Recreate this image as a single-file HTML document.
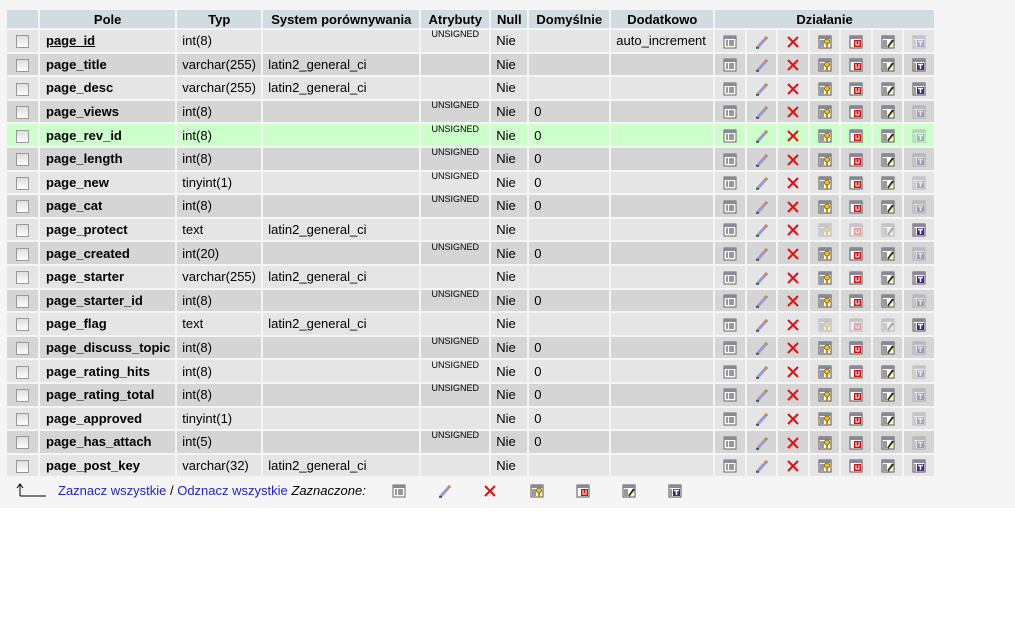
<!DOCTYPE html>
<html><head><meta charset="utf-8"><style>
body{margin:0;background:#fff;font-family:"Liberation Sans",Arial,sans-serif;font-size:13px;color:#000}
#wrap{position:absolute;left:0;top:0;width:1015px;height:508px;background:#f5f5f5}
table{position:absolute;left:5px;top:8px;border-collapse:separate;border-spacing:2px 2px}
td,th{padding:0 5px;height:21.6px;line-height:15px;white-space:nowrap;box-sizing:border-box}
th{background:#d0dce0;font-weight:bold;height:18px;font-size:13px}
tr.a td{background:#e5e5e5}tr.b td{background:#d5d5d5}tr.g td{background:#ccffcc}
td.n{font-weight:bold;padding-left:6px}
td.u{font-size:9px;text-align:center}
td.u span{position:relative;top:-6px}
td.i{text-align:center;padding:0}
td.c{text-align:center;padding:0;width:29.5px}
.cb{display:inline-block;width:11px;height:11px;border:1px solid #999;background:linear-gradient(#ddd,#fff);vertical-align:middle}
svg.ic{width:14px;height:14px;vertical-align:middle}
.f{opacity:.35}
#foot{position:absolute;left:0;top:480px;height:22px;width:700px;font-size:13px}
#foot a{color:#2222cc;text-decoration:none}
</style></head><body>
<svg width="0" height="0" style="position:absolute">
<defs>
<symbol id="br" viewBox="0 0 14 14"><rect x="1" y="1" width="12" height="12" fill="#fff" stroke="#666"/><rect x="1" y="1" width="12" height="3" fill="#889"/><path d="M3 6h2M3 8h2M3 10h2M6 6h5M6 8h5M6 10h5" stroke="#333"/></symbol>
<symbol id="pe" viewBox="0 0 14 14"><path d="M2 13L12 2" stroke="#9999cc" stroke-width="3"/><path d="M10.5 3.5L12 2" stroke="#e08020" stroke-width="3"/><path d="M1 13h3" stroke="#000"/></symbol>
<symbol id="x" viewBox="0 0 14 14"><path d="M2 2L12 12M12 2L2 12" stroke="#e01010" stroke-width="2"/></symbol>
<symbol id="k" viewBox="0 0 14 14"><rect x="1" y="1" width="12" height="12" fill="#fff" stroke="#555"/><rect x="1" y="1" width="12" height="3" fill="#889"/><path d="M3 5v7M5 5v7" stroke="#333"/><circle cx="9" cy="6.5" r="2.5" fill="#f0c020" stroke="#886600"/><path d="M9 9v4" stroke="#c09000" stroke-width="2"/></symbol>
<symbol id="un" viewBox="0 0 14 14"><rect x="1" y="1" width="12" height="12" fill="#fff" stroke="#555"/><rect x="1" y="1" width="12" height="3" fill="#889"/><rect x="5" y="5" width="7" height="7" fill="#cc1111"/><path d="M7 6v4h3V6" stroke="#fff" fill="none"/></symbol>
<symbol id="ix" viewBox="0 0 14 14"><rect x="1" y="1" width="12" height="12" fill="#fff" stroke="#555"/><rect x="1" y="1" width="12" height="3" fill="#889"/><path d="M3 5v7M5 5v7" stroke="#333"/><path d="M7 12L12 5" stroke="#222" stroke-width="2"/><path d="M8 12l4-5" stroke="#e0c020"/></symbol>
<symbol id="t" viewBox="0 0 14 14"><rect x="1" y="1" width="12" height="12" fill="#fff" stroke="#555"/><rect x="1" y="1" width="12" height="3" fill="#889"/><path d="M3 5v7" stroke="#333"/><rect x="5" y="5" width="7" height="7" fill="#442288"/><path d="M6 6.5h5M8.5 6.5V11" stroke="#fff" stroke-width="1.5"/></symbol>
</defs></svg>
<div id="wrap">
<table>
<tr><th style="width:31px"></th><th style="width:135px">Pole</th><th style="width:84px">Typ</th><th style="width:156px">System porównywania</th><th style="width:68px">Atrybuty</th><th style="width:36px">Null</th><th style="width:80px">Domyślnie</th><th style="width:102px">Dodatkowo</th><th colspan="7">Działanie</th></tr>
<tr class="a"><td class="i"><span class="cb"></span></td><td class="n"><u>page_id</u></td><td>int(8)</td><td></td><td class="u"><span>UNSIGNED</span></td><td>Nie</td><td></td><td>auto_increment</td><td class="c"><svg class="ic"><use href="#br"/></svg></td><td class="c"><svg class="ic"><use href="#pe"/></svg></td><td class="c"><svg class="ic"><use href="#x"/></svg></td><td class="c"><svg class="ic"><use href="#k"/></svg></td><td class="c"><svg class="ic"><use href="#un"/></svg></td><td class="c"><svg class="ic"><use href="#ix"/></svg></td><td class="c"><svg class="ic f"><use href="#t"/></svg></td></tr>
<tr class="b"><td class="i"><span class="cb"></span></td><td class="n">page_title</td><td>varchar(255)</td><td>latin2_general_ci</td><td></td><td>Nie</td><td></td><td></td><td class="c"><svg class="ic"><use href="#br"/></svg></td><td class="c"><svg class="ic"><use href="#pe"/></svg></td><td class="c"><svg class="ic"><use href="#x"/></svg></td><td class="c"><svg class="ic"><use href="#k"/></svg></td><td class="c"><svg class="ic"><use href="#un"/></svg></td><td class="c"><svg class="ic"><use href="#ix"/></svg></td><td class="c"><svg class="ic"><use href="#t"/></svg></td></tr>
<tr class="a"><td class="i"><span class="cb"></span></td><td class="n">page_desc</td><td>varchar(255)</td><td>latin2_general_ci</td><td></td><td>Nie</td><td></td><td></td><td class="c"><svg class="ic"><use href="#br"/></svg></td><td class="c"><svg class="ic"><use href="#pe"/></svg></td><td class="c"><svg class="ic"><use href="#x"/></svg></td><td class="c"><svg class="ic"><use href="#k"/></svg></td><td class="c"><svg class="ic"><use href="#un"/></svg></td><td class="c"><svg class="ic"><use href="#ix"/></svg></td><td class="c"><svg class="ic"><use href="#t"/></svg></td></tr>
<tr class="b"><td class="i"><span class="cb"></span></td><td class="n">page_views</td><td>int(8)</td><td></td><td class="u"><span>UNSIGNED</span></td><td>Nie</td><td>0</td><td></td><td class="c"><svg class="ic"><use href="#br"/></svg></td><td class="c"><svg class="ic"><use href="#pe"/></svg></td><td class="c"><svg class="ic"><use href="#x"/></svg></td><td class="c"><svg class="ic"><use href="#k"/></svg></td><td class="c"><svg class="ic"><use href="#un"/></svg></td><td class="c"><svg class="ic"><use href="#ix"/></svg></td><td class="c"><svg class="ic f"><use href="#t"/></svg></td></tr>
<tr class="g"><td class="i"><span class="cb"></span></td><td class="n">page_rev_id</td><td>int(8)</td><td></td><td class="u"><span>UNSIGNED</span></td><td>Nie</td><td>0</td><td></td><td class="c"><svg class="ic"><use href="#br"/></svg></td><td class="c"><svg class="ic"><use href="#pe"/></svg></td><td class="c"><svg class="ic"><use href="#x"/></svg></td><td class="c"><svg class="ic"><use href="#k"/></svg></td><td class="c"><svg class="ic"><use href="#un"/></svg></td><td class="c"><svg class="ic"><use href="#ix"/></svg></td><td class="c"><svg class="ic f"><use href="#t"/></svg></td></tr>
<tr class="b"><td class="i"><span class="cb"></span></td><td class="n">page_length</td><td>int(8)</td><td></td><td class="u"><span>UNSIGNED</span></td><td>Nie</td><td>0</td><td></td><td class="c"><svg class="ic"><use href="#br"/></svg></td><td class="c"><svg class="ic"><use href="#pe"/></svg></td><td class="c"><svg class="ic"><use href="#x"/></svg></td><td class="c"><svg class="ic"><use href="#k"/></svg></td><td class="c"><svg class="ic"><use href="#un"/></svg></td><td class="c"><svg class="ic"><use href="#ix"/></svg></td><td class="c"><svg class="ic f"><use href="#t"/></svg></td></tr>
<tr class="a"><td class="i"><span class="cb"></span></td><td class="n">page_new</td><td>tinyint(1)</td><td></td><td class="u"><span>UNSIGNED</span></td><td>Nie</td><td>0</td><td></td><td class="c"><svg class="ic"><use href="#br"/></svg></td><td class="c"><svg class="ic"><use href="#pe"/></svg></td><td class="c"><svg class="ic"><use href="#x"/></svg></td><td class="c"><svg class="ic"><use href="#k"/></svg></td><td class="c"><svg class="ic"><use href="#un"/></svg></td><td class="c"><svg class="ic"><use href="#ix"/></svg></td><td class="c"><svg class="ic f"><use href="#t"/></svg></td></tr>
<tr class="b"><td class="i"><span class="cb"></span></td><td class="n">page_cat</td><td>int(8)</td><td></td><td class="u"><span>UNSIGNED</span></td><td>Nie</td><td>0</td><td></td><td class="c"><svg class="ic"><use href="#br"/></svg></td><td class="c"><svg class="ic"><use href="#pe"/></svg></td><td class="c"><svg class="ic"><use href="#x"/></svg></td><td class="c"><svg class="ic"><use href="#k"/></svg></td><td class="c"><svg class="ic"><use href="#un"/></svg></td><td class="c"><svg class="ic"><use href="#ix"/></svg></td><td class="c"><svg class="ic f"><use href="#t"/></svg></td></tr>
<tr class="a"><td class="i"><span class="cb"></span></td><td class="n">page_protect</td><td>text</td><td>latin2_general_ci</td><td></td><td>Nie</td><td></td><td></td><td class="c"><svg class="ic"><use href="#br"/></svg></td><td class="c"><svg class="ic"><use href="#pe"/></svg></td><td class="c"><svg class="ic"><use href="#x"/></svg></td><td class="c"><svg class="ic f"><use href="#k"/></svg></td><td class="c"><svg class="ic f"><use href="#un"/></svg></td><td class="c"><svg class="ic f"><use href="#ix"/></svg></td><td class="c"><svg class="ic"><use href="#t"/></svg></td></tr>
<tr class="b"><td class="i"><span class="cb"></span></td><td class="n">page_created</td><td>int(20)</td><td></td><td class="u"><span>UNSIGNED</span></td><td>Nie</td><td>0</td><td></td><td class="c"><svg class="ic"><use href="#br"/></svg></td><td class="c"><svg class="ic"><use href="#pe"/></svg></td><td class="c"><svg class="ic"><use href="#x"/></svg></td><td class="c"><svg class="ic"><use href="#k"/></svg></td><td class="c"><svg class="ic"><use href="#un"/></svg></td><td class="c"><svg class="ic"><use href="#ix"/></svg></td><td class="c"><svg class="ic f"><use href="#t"/></svg></td></tr>
<tr class="a"><td class="i"><span class="cb"></span></td><td class="n">page_starter</td><td>varchar(255)</td><td>latin2_general_ci</td><td></td><td>Nie</td><td></td><td></td><td class="c"><svg class="ic"><use href="#br"/></svg></td><td class="c"><svg class="ic"><use href="#pe"/></svg></td><td class="c"><svg class="ic"><use href="#x"/></svg></td><td class="c"><svg class="ic"><use href="#k"/></svg></td><td class="c"><svg class="ic"><use href="#un"/></svg></td><td class="c"><svg class="ic"><use href="#ix"/></svg></td><td class="c"><svg class="ic"><use href="#t"/></svg></td></tr>
<tr class="b"><td class="i"><span class="cb"></span></td><td class="n">page_starter_id</td><td>int(8)</td><td></td><td class="u"><span>UNSIGNED</span></td><td>Nie</td><td>0</td><td></td><td class="c"><svg class="ic"><use href="#br"/></svg></td><td class="c"><svg class="ic"><use href="#pe"/></svg></td><td class="c"><svg class="ic"><use href="#x"/></svg></td><td class="c"><svg class="ic"><use href="#k"/></svg></td><td class="c"><svg class="ic"><use href="#un"/></svg></td><td class="c"><svg class="ic"><use href="#ix"/></svg></td><td class="c"><svg class="ic f"><use href="#t"/></svg></td></tr>
<tr class="a"><td class="i"><span class="cb"></span></td><td class="n">page_flag</td><td>text</td><td>latin2_general_ci</td><td></td><td>Nie</td><td></td><td></td><td class="c"><svg class="ic"><use href="#br"/></svg></td><td class="c"><svg class="ic"><use href="#pe"/></svg></td><td class="c"><svg class="ic"><use href="#x"/></svg></td><td class="c"><svg class="ic f"><use href="#k"/></svg></td><td class="c"><svg class="ic f"><use href="#un"/></svg></td><td class="c"><svg class="ic f"><use href="#ix"/></svg></td><td class="c"><svg class="ic"><use href="#t"/></svg></td></tr>
<tr class="b"><td class="i"><span class="cb"></span></td><td class="n">page_discuss_topic</td><td>int(8)</td><td></td><td class="u"><span>UNSIGNED</span></td><td>Nie</td><td>0</td><td></td><td class="c"><svg class="ic"><use href="#br"/></svg></td><td class="c"><svg class="ic"><use href="#pe"/></svg></td><td class="c"><svg class="ic"><use href="#x"/></svg></td><td class="c"><svg class="ic"><use href="#k"/></svg></td><td class="c"><svg class="ic"><use href="#un"/></svg></td><td class="c"><svg class="ic"><use href="#ix"/></svg></td><td class="c"><svg class="ic f"><use href="#t"/></svg></td></tr>
<tr class="a"><td class="i"><span class="cb"></span></td><td class="n">page_rating_hits</td><td>int(8)</td><td></td><td class="u"><span>UNSIGNED</span></td><td>Nie</td><td>0</td><td></td><td class="c"><svg class="ic"><use href="#br"/></svg></td><td class="c"><svg class="ic"><use href="#pe"/></svg></td><td class="c"><svg class="ic"><use href="#x"/></svg></td><td class="c"><svg class="ic"><use href="#k"/></svg></td><td class="c"><svg class="ic"><use href="#un"/></svg></td><td class="c"><svg class="ic"><use href="#ix"/></svg></td><td class="c"><svg class="ic f"><use href="#t"/></svg></td></tr>
<tr class="b"><td class="i"><span class="cb"></span></td><td class="n">page_rating_total</td><td>int(8)</td><td></td><td class="u"><span>UNSIGNED</span></td><td>Nie</td><td>0</td><td></td><td class="c"><svg class="ic"><use href="#br"/></svg></td><td class="c"><svg class="ic"><use href="#pe"/></svg></td><td class="c"><svg class="ic"><use href="#x"/></svg></td><td class="c"><svg class="ic"><use href="#k"/></svg></td><td class="c"><svg class="ic"><use href="#un"/></svg></td><td class="c"><svg class="ic"><use href="#ix"/></svg></td><td class="c"><svg class="ic f"><use href="#t"/></svg></td></tr>
<tr class="a"><td class="i"><span class="cb"></span></td><td class="n">page_approved</td><td>tinyint(1)</td><td></td><td></td><td>Nie</td><td>0</td><td></td><td class="c"><svg class="ic"><use href="#br"/></svg></td><td class="c"><svg class="ic"><use href="#pe"/></svg></td><td class="c"><svg class="ic"><use href="#x"/></svg></td><td class="c"><svg class="ic"><use href="#k"/></svg></td><td class="c"><svg class="ic"><use href="#un"/></svg></td><td class="c"><svg class="ic"><use href="#ix"/></svg></td><td class="c"><svg class="ic f"><use href="#t"/></svg></td></tr>
<tr class="b"><td class="i"><span class="cb"></span></td><td class="n">page_has_attach</td><td>int(5)</td><td></td><td class="u"><span>UNSIGNED</span></td><td>Nie</td><td>0</td><td></td><td class="c"><svg class="ic"><use href="#br"/></svg></td><td class="c"><svg class="ic"><use href="#pe"/></svg></td><td class="c"><svg class="ic"><use href="#x"/></svg></td><td class="c"><svg class="ic"><use href="#k"/></svg></td><td class="c"><svg class="ic"><use href="#un"/></svg></td><td class="c"><svg class="ic"><use href="#ix"/></svg></td><td class="c"><svg class="ic f"><use href="#t"/></svg></td></tr>
<tr class="a"><td class="i"><span class="cb"></span></td><td class="n">page_post_key</td><td>varchar(32)</td><td>latin2_general_ci</td><td></td><td>Nie</td><td></td><td></td><td class="c"><svg class="ic"><use href="#br"/></svg></td><td class="c"><svg class="ic"><use href="#pe"/></svg></td><td class="c"><svg class="ic"><use href="#x"/></svg></td><td class="c"><svg class="ic"><use href="#k"/></svg></td><td class="c"><svg class="ic"><use href="#un"/></svg></td><td class="c"><svg class="ic"><use href="#ix"/></svg></td><td class="c"><svg class="ic"><use href="#t"/></svg></td></tr>
</table>
<div id="foot">
<svg style="position:absolute;left:16px;top:3px" width="30" height="14"><path d="M4 13V2M1 5l3-4 3 4M4 13h26" stroke="#000" fill="none"/></svg>
<span style="position:absolute;left:58px;top:3px"><a>Zaznacz wszystkie</a> / <a>Odznacz wszystkie</a> <i>Zaznaczone:</i></span>
<svg class="ic" style="position:absolute;left:392px;top:4px"><use href="#br"/></svg>
<svg class="ic" style="position:absolute;left:438px;top:4px"><use href="#pe"/></svg>
<svg class="ic" style="position:absolute;left:483px;top:4px"><use href="#x"/></svg>
<svg class="ic" style="position:absolute;left:530px;top:4px"><use href="#k"/></svg>
<svg class="ic" style="position:absolute;left:576px;top:4px"><use href="#un"/></svg>
<svg class="ic" style="position:absolute;left:622px;top:4px"><use href="#ix"/></svg>
<svg class="ic" style="position:absolute;left:668px;top:4px"><use href="#t"/></svg>
</div>
</div>
</body></html>
